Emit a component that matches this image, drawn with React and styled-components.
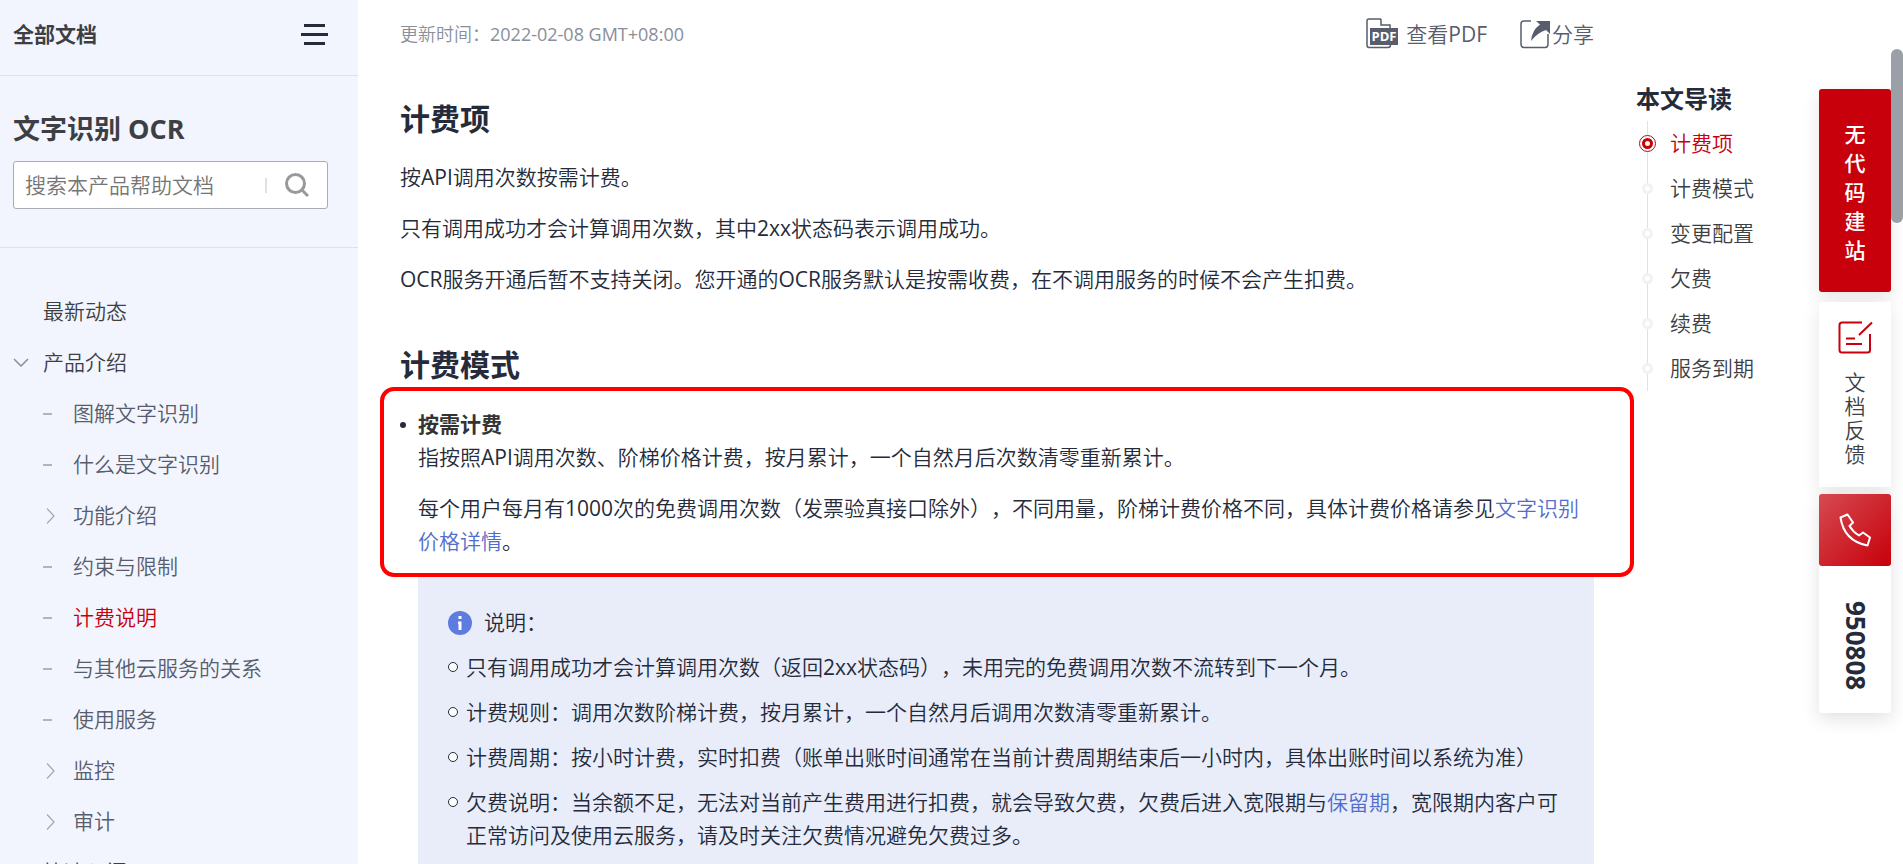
import React from 'react';
import styled, { createGlobalStyle } from 'styled-components';

const GlobalStyle = createGlobalStyle`
  * {
    box-sizing: border-box;
  }
  body {
    margin: 0;
    background: #fff;
    color: #252b3a;
    font-family: 'Open Sans', 'Noto Sans CJK SC DemiLight', 'Noto Sans CJK SC', sans-serif;
    font-size: 21px;
    font-weight: 400;
    line-height: 33px;
    text-spacing-trim: space-all;
  }
  h1, h2, h3, p, ul {
    margin: 0;
    padding: 0;
  }
  h1, h2, h3 {
    font-family: 'Open Sans', 'Noto Sans CJK SC', sans-serif;
  }
  ul {
    list-style: none;
  }
  a {
    color: #526ecc;
    text-decoration: none;
  }
  button, input {
    font: inherit;
    border: 0;
    padding: 0;
    background: none;
  }
`;

const Page = styled.div`
  display: flex;
  height: 100vh;
  overflow: hidden;
`;

// --- Sidebar ---
const Sidebar = styled.aside`
  flex: 0 0 358px;
  min-width: 0;
  background: #f2f5fe;
  color: #3d3f43;
`;

const SidebarTop = styled.div`
  display: flex;
  align-items: center;
  justify-content: space-between;
  height: 76px;
  padding: 0 30px 6px 13px;
  border-bottom: 1px solid #dfe1e6;
`;

const AllDocs = styled.h3`
  font-size: 21px;
  font-weight: 700;
`;

const MenuButton = styled.button`
  display: flex;
  flex-direction: column;
  align-items: center;
  gap: 6px;
  width: 27px;
`;

const MenuBar = styled.span`
  width: ${props => (props.$wide ? '27px' : '21px')};
  height: 3px;
  background: #252b3a;
`;

const SearchSection = styled.div`
  height: 172px;
  padding: 36px 30px 0 13px;
  border-bottom: 1px solid #dfe1e6;
`;

const ProductName = styled.h2`
  font-size: 27px;
  font-weight: 700;
  line-height: 33px;
  margin-bottom: 16px;
`;

const SearchBox = styled.form`
  display: flex;
  align-items: center;
  height: 48px;
  padding: 0 18px 0 11px;
  background: #fff;
  border: 1px solid #a9acb8;
  border-radius: 3px;
`;

const SearchInput = styled.input`
  flex: 1;
  min-width: 0;
  outline: none;

  &::placeholder {
    color: #757575;
    opacity: 1;
  }
`;

const SearchDivider = styled.span`
  width: 2px;
  height: 15px;
  margin-right: 18px;
  background: #dfe1e6;
`;

const SearchButton = styled.button`
  display: flex;
`;

const NavList = styled.ul`
  padding-top: 38px;
`;

const NavItem = styled.li`
  display: flex;
  align-items: center;
  height: 51px;
  padding-left: ${props => (props.$level === 2 ? '43px' : '13px')};
`;

const NavMark = styled.span`
  display: flex;
  align-items: center;
  width: 30px;
`;

const Dash = styled.span`
  width: 9px;
  height: 2px;
  background: #b1b4c0;
`;

const NavLink = styled.a`
  color: ${props => (props.$active ? '#c7000b' : props.$level === 2 ? '#575d6c' : '#3d3f43')};
`;

// --- Article ---
const Article = styled.main`
  flex: 1;
  min-width: 0;
  padding-left: 42px;
`;

const ArticleTop = styled.div`
  display: flex;
  align-items: center;
  justify-content: space-between;
  height: 68px;
`;

const Updated = styled.span`
  font-size: 18px;
  color: #8a8e99;
`;

const Tools = styled.div`
  display: flex;
  gap: 33px;
`;

const ToolButton = styled.button`
  display: flex;
  align-items: center;
  gap: ${props => props.$gap}px;
  color: #575d6c;
`;

const Heading = styled.h2`
  font-size: 30px;
  font-weight: 700;
  line-height: 42px;
  margin: ${props => (props.$first ? '30px 0 21px' : '48px 0 22px')};
`;

const Paragraph = styled.p`
  margin-bottom: 18px;
`;

const Highlight = styled.div`
  position: relative;
  padding-bottom: 19px;

  &::after {
    content: '';
    position: absolute;
    top: -21px;
    left: -20px;
    right: -40px;
    bottom: 0;
    border: 4px solid #f00;
    border-radius: 14px;
    pointer-events: none;
  }
`;

const BulletItem = styled.div`
  padding-left: 18px;
`;

const BulletTitle = styled.h3`
  display: flex;
  align-items: center;
  margin-left: -18px;
  font-size: 21px;
  font-weight: 700;
  line-height: 33px;
  color: #333;

  &::before {
    content: '';
    width: 6px;
    height: 6px;
    margin-right: 12px;
    border-radius: 50%;
    background: #252b3a;
  }
`;

const Note = styled.section`
  margin-left: 18px;
  padding: 29px 30px 40px;
  background: #e9edfa;
`;

const NoteTitle = styled.div`
  display: flex;
  align-items: center;
  gap: 12px;
  margin-bottom: 12px;
`;

const NoteItem = styled.li`
  display: flex;
  margin-bottom: 12px;

  &::before {
    content: '';
    flex: none;
    width: 8px;
    height: 8px;
    margin: 11px 8px 0 0;
    border: 1px solid #252b3a;
    border-radius: 50%;
    background: #fff;
  }
`;

// --- Table of contents ---
const Toc = styled.nav`
  flex: 0 0 225px;
  padding: 82px 0 0 42px;
`;

const TocTitle = styled.h3`
  font-size: 24px;
  font-weight: 700;
  line-height: 33px;
  margin-bottom: 6px;
`;

const TocList = styled.ul`
  width: max-content;
  height: 270px;
  margin-left: 11px;
  border-left: 1px solid #dfe1e6;
`;

const TocItem = styled.li`
  display: flex;
  align-items: center;
  gap: ${props => (props.$active ? '14px' : '17px')};
  height: 45px;
  margin-left: ${props => (props.$active ? '-9px' : '-6px')};
`;

const TocDot = styled.span`
  width: 11px;
  height: 11px;
  border: 3px solid #f2f2f3;
  border-radius: 50%;
  background: #fff;
`;

const TocLink = styled.a`
  color: ${props => (props.$active ? '#c7000b' : '#3d3f43')};
`;

// --- Floating rail ---
const Rail = styled.aside`
  flex: 0 0 72px;
  padding-top: 89px;
  text-align: center;
`;

const BuildLink = styled.a`
  display: flex;
  flex-direction: column;
  align-items: center;
  padding: 30px 0 28px;
  font-family: 'Noto Sans CJK SC', sans-serif;
  font-weight: 500;
  line-height: 29px;
  color: #fff;
  background: #c7000b;
  border-radius: 3px;
  box-shadow: 0 6px 18px rgba(0, 0, 0, 0.1);
`;

const RailButton = styled.button`
  display: flex;
  flex-direction: column;
  align-items: center;
  width: 100%;
  height: 185px;
  margin: 10px 0 7px;
  padding-top: 19px;
  color: #3d3f43;
  background: #fff;
  box-shadow: 0 6px 18px rgba(0, 0, 0, 0.1);
`;

const VerticalLabel = styled.span`
  width: 21px;
  margin-top: 16px;
  line-height: 24px;
`;

const Hotline = styled.div`
  background: #fff;
  border-radius: 3px;
  box-shadow: 0 6px 18px rgba(0, 0, 0, 0.12);
`;

const PhoneButton = styled.button`
  display: flex;
  align-items: center;
  justify-content: center;
  width: 100%;
  height: 72px;
  border-radius: 3px;
  background: linear-gradient(135deg, #d64a52, #c7000b);
`;

const PhoneNumber = styled.a`
  display: flex;
  align-items: center;
  justify-content: center;
  width: 100%;
  height: 147px;
  padding-top: 12px;
  writing-mode: vertical-rl;
  font-size: 26px;
  font-weight: 700;
  color: #252b3a;
`;

const ScrollTrack = styled.div`
  flex: 0 0 12px;
  padding-top: 49px;
`;

const ScrollThumb = styled.div`
  height: 174px;
  border-radius: 6px;
  background: #9b9fa8;
`;

// --- Icons ---
const SearchIcon = () => (
  <svg width="24" height="24" viewBox="0 0 24 24" fill="none" stroke="#999" strokeWidth="3">
    <circle cx="10.500" cy="10.500" r="9" />
    <path d="M17 17l6 6" />
  </svg>
);

const ChevronDown = () => (
  <svg width="16" height="9" viewBox="0 0 16 9" fill="none" stroke="#8a8e99" strokeWidth="1.500">
    <path d="M1 1l7 7 7-7" />
  </svg>
);

const ChevronRight = () => (
  <svg width="12" height="16" viewBox="0 0 12 16" fill="none" stroke="#a3a6b0" strokeWidth="1.200">
    <path d="M4 0.500l7 7.500-7 7.500" />
  </svg>
);

const PdfIcon = () => (
  <svg width="32" height="32" viewBox="0 0 32 32" fill="none">
    <path d="M15 1H3Q1 1 1 3V27Q1 29.500 3 29.500H22Q24.500 29.500 24.500 27M15 1V7H24V10" stroke="#575d6c" strokeWidth="1.500" />
    <rect x="4" y="10" width="28" height="17" fill="#575d6c" />
    <text x="18" y="23" textAnchor="middle" fontFamily="Open Sans, sans-serif" fontSize="13" fontWeight="700" fill="#fff">PDF</text>
  </svg>
);

const ShareIcon = () => (
  <svg width="30" height="30" viewBox="0 0 30 30" fill="none">
    <path d="M11 2H4Q1 2 1 5V25Q1 28.500 4 28.500H25Q28 28.500 28 25V15" stroke="#575d6c" strokeWidth="1.500" />
    <path d="M16 2H30V15L26 11Q17 14 11 22Q12 11 20 5.500Z" fill="#575d6c" />
  </svg>
);

const InfoIcon = () => (
  <svg width="24" height="24" viewBox="0 0 24 24">
    <circle cx="12" cy="12" r="12" fill="#5e7ce0" />
    <path d="M10.500 5h3v3h-3zM10 10.500h3.500V19h-3v-6H10z" fill="#fff" />
  </svg>
);

const ActiveDot = () => (
  <svg width="17" height="17" viewBox="0 0 17 17" fill="#fff" stroke="#c7000b">
    <circle cx="8.500" cy="8.500" r="8" />
    <circle cx="8.500" cy="8.500" r="4" strokeWidth="3" />
  </svg>
);

const FeedbackIcon = () => (
  <svg width="35" height="33" viewBox="0 0 35 33" fill="none" stroke="#c7000b" strokeWidth="2">
    <path d="M24 1.500H4Q1.500 1.500 1.500 4V29Q1.500 31.500 4 31.500H29.500Q32 31.500 32 29V13" />
    <path d="M34 1.500L21 14M8 17.500h9M8 23h16" />
  </svg>
);

const PhoneIcon = () => (
  <svg width="32" height="34" viewBox="0 0 32 34" fill="none" stroke="#fff" strokeWidth="2" strokeLinejoin="round">
    <path d="M1.500 4.500L8.500 1.500L14 9.500L10.500 13Q14 19 20 22.500L24 19.500L31 24.500L28.500 32.500Q5 28 1.500 4.500Z" />
  </svg>
);

const navItems = [
  { text: '最新动态', level: 1 },
  { text: '产品介绍', level: 1, mark: 'down' },
  { text: '图解文字识别', level: 2, mark: 'dash' },
  { text: '什么是文字识别', level: 2, mark: 'dash' },
  { text: '功能介绍', level: 2, mark: 'right' },
  { text: '约束与限制', level: 2, mark: 'dash' },
  { text: '计费说明', level: 2, mark: 'dash', active: true },
  { text: '与其他云服务的关系', level: 2, mark: 'dash' },
  { text: '使用服务', level: 2, mark: 'dash' },
  { text: '监控', level: 2, mark: 'right' },
  { text: '审计', level: 2, mark: 'right' },
  { text: '快速入门', level: 1 },
];

const marks = {
  down: <ChevronDown />,
  right: <ChevronRight />,
  dash: <Dash />,
};

const tocItems = ['计费项', '计费模式', '变更配置', '欠费', '续费', '服务到期'];

const App = () => (
  <>
    <GlobalStyle />
    <Page>
      <Sidebar>
        <SidebarTop>
          <AllDocs>全部文档</AllDocs>
          <MenuButton type="button" aria-label="菜单">
            <MenuBar />
            <MenuBar $wide />
            <MenuBar />
          </MenuButton>
        </SidebarTop>
        <SearchSection>
          <ProductName>文字识别 OCR</ProductName>
          <SearchBox>
            <SearchInput type="text" aria-label="搜索" placeholder="搜索本产品帮助文档" />
            <SearchDivider />
            <SearchButton type="button" aria-label="搜索">
              <SearchIcon />
            </SearchButton>
          </SearchBox>
        </SearchSection>
        <NavList>
          {navItems.map(item => (
            <NavItem key={item.text} $level={item.level}>
              <NavMark>{marks[item.mark]}</NavMark>
              <NavLink href="#" $level={item.level} $active={item.active}>{item.text}</NavLink>
            </NavItem>
          ))}
        </NavList>
      </Sidebar>

      <Article>
        <ArticleTop>
          <Updated>更新时间：2022-02-08 GMT+08:00</Updated>
          <Tools>
            <ToolButton type="button" $gap={8}><PdfIcon />查看PDF</ToolButton>
            <ToolButton type="button" $gap={2}><ShareIcon />分享</ToolButton>
          </Tools>
        </ArticleTop>

        <Heading $first>计费项</Heading>
        <Paragraph>按API调用次数按需计费。</Paragraph>
        <Paragraph>只有调用成功才会计算调用次数，其中2xx状态码表示调用成功。</Paragraph>
        <Paragraph>OCR服务开通后暂不支持关闭。您开通的OCR服务默认是按需收费，在不调用服务的时候不会产生扣费。</Paragraph>

        <Heading>计费模式</Heading>
        <Highlight>
          <BulletItem>
            <BulletTitle>按需计费</BulletTitle>
            <Paragraph>指按照API调用次数、阶梯价格计费，按月累计，一个自然月后次数清零重新累计。</Paragraph>
            <p>
              每个用户每月有1000次的免费调用次数（发票验真接口除外），不同用量，阶梯计费价格不同，具体计费价格请参见<a href="#">文字识别价格详情</a>。
            </p>
          </BulletItem>
        </Highlight>
        <Note>
          <NoteTitle><InfoIcon />说明：</NoteTitle>
          <ul>
            <NoteItem><p>只有调用成功才会计算调用次数（返回2xx状态码），未用完的免费调用次数不流转到下一个月。</p></NoteItem>
            <NoteItem><p>计费规则：调用次数阶梯计费，按月累计，一个自然月后调用次数清零重新累计。</p></NoteItem>
            <NoteItem><p>计费周期：按小时计费，实时扣费（账单出账时间通常在当前计费周期结束后一小时内，具体出账时间以系统为准）</p></NoteItem>
            <NoteItem>
              <p>
                欠费说明：当余额不足，无法对当前产生费用进行扣费，就会导致欠费，欠费后进入宽限期与<a href="#">保留期</a>，宽限期内客户可正常访问及使用云服务，请及时关注欠费情况避免欠费过多。
              </p>
            </NoteItem>
          </ul>
        </Note>
      </Article>

      <Toc>
        <TocTitle>本文导读</TocTitle>
        <TocList>
          {tocItems.map((text, i) => (
            <TocItem key={text} $active={i === 0}>
              {i === 0 ? <ActiveDot /> : <TocDot />}
              <TocLink href="#" $active={i === 0}>{text}</TocLink>
            </TocItem>
          ))}
        </TocList>
      </Toc>

      <Rail>
        <BuildLink href="#">
          {'无代码建站'.split('').map(char => <span key={char}>{char}</span>)}
        </BuildLink>
        <RailButton type="button">
          <FeedbackIcon />
          <VerticalLabel>文档反馈</VerticalLabel>
        </RailButton>
        <Hotline>
          <PhoneButton type="button" aria-label="电话"><PhoneIcon /></PhoneButton>
          <PhoneNumber href="tel:950808">950808</PhoneNumber>
        </Hotline>
      </Rail>

      <ScrollTrack>
        <ScrollThumb />
      </ScrollTrack>
    </Page>
  </>
);

export default App;
